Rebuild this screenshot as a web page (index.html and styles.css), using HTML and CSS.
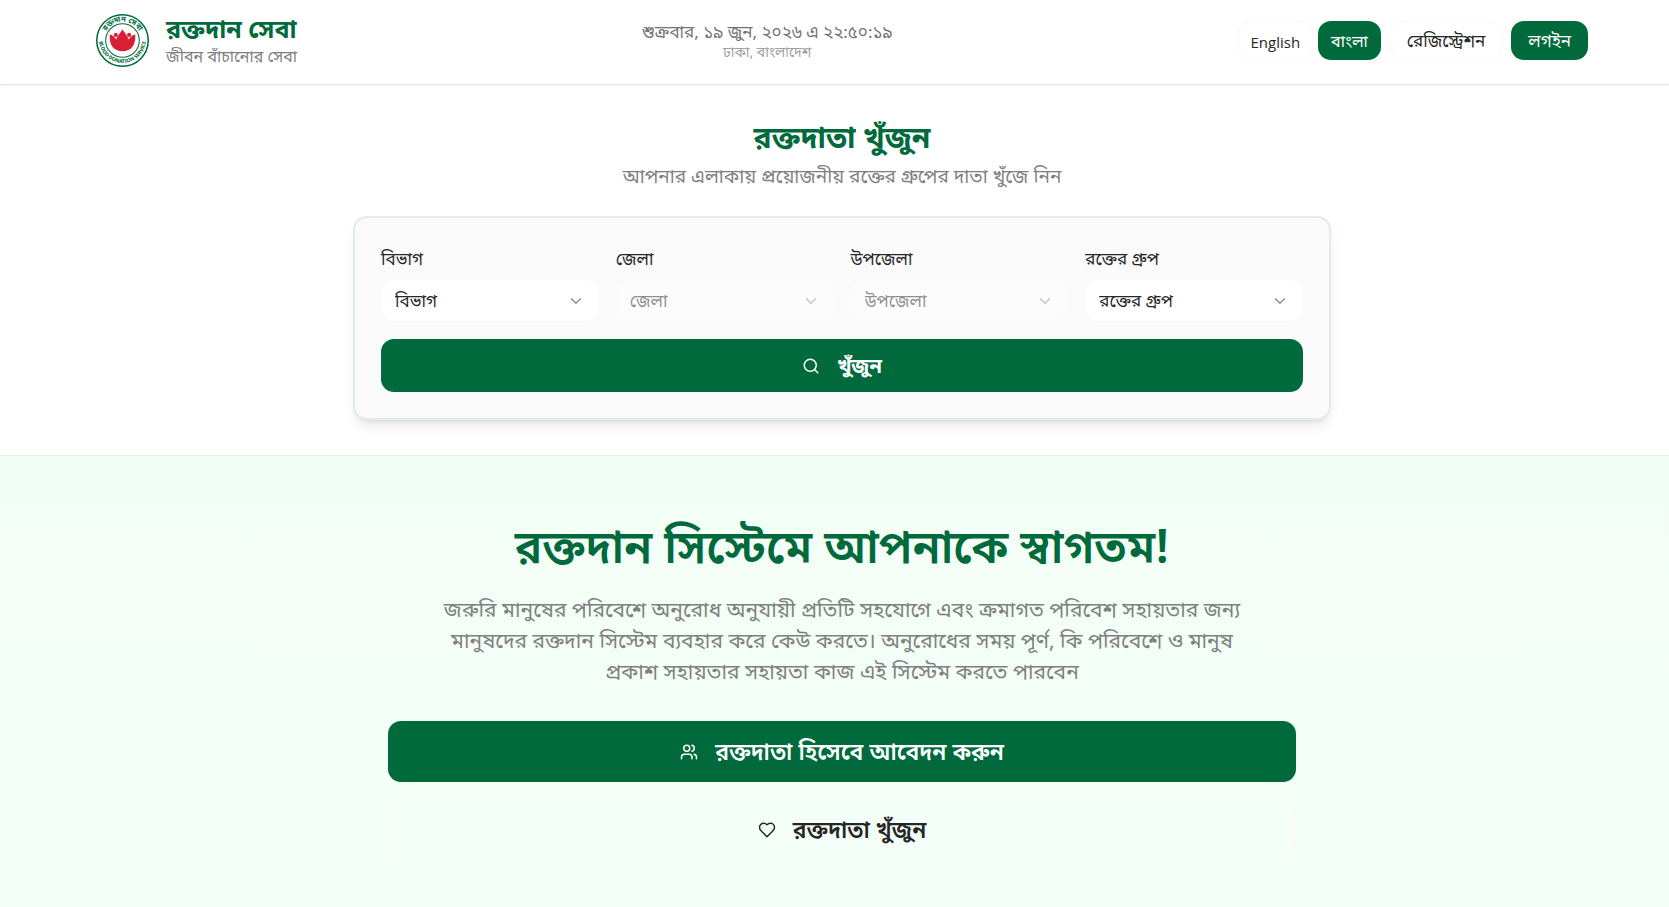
FILE: index.html
```html
<!DOCTYPE html>
<html lang="bn">
<head>
  <meta charset="UTF-8">
  <meta name="viewport" content="width=device-width, initial-scale=1.0">
  <title>রক্তদান সেবা</title>
  <link rel="stylesheet" href="styles.css">
</head>
<body>
  <header class="header">
    <div class="header-inner">
      <a class="brand" href="#">
        <svg class="logo" viewBox="0 0 104 104" role="img" aria-label="Blood Donation Service">
          <defs>
            <path id="arc-top" d="M15 52a37 37 0 0 1 74 0"/>
            <path id="arc-bottom" d="M6 50a46 46 0 0 0 92 0"/>
          </defs>
          <circle cx="52" cy="52" r="50.5" fill="#fff" stroke="#006a3d" stroke-width="3"/>
          <circle cx="52" cy="52" r="33" fill="none" stroke="#006a3d" stroke-width="2"/>
          <text class="logo-bn"><textPath href="#arc-top" startOffset="50%">রক্তদান সেবা</textPath></text>
          <text class="logo-en"><textPath href="#arc-bottom" startOffset="50%">BLOOD DONATION SERVICE</textPath></text>
          <g fill="#d81f35">
            <path d="M27 40c5 1 9 4 12 9l5 6h16l5-6c3-5 7-8 12-9 1 15-4 27-13 30-4 2-8 3-12 3s-8-1-12-3c-9-3-14-15-13-30z"/>
            <circle cx="39" cy="41" r="4"/>
            <circle cx="65" cy="41" r="4"/>
            <path d="M52 30c5 9 13 15 13 25a13 13 0 0 1-26 0c0-10 8-16 13-25z"/>
          </g>
        </svg>
        <span class="brand-text">
          <strong>রক্তদান সেবা</strong>
          <span>জীবন বাঁচানোর সেবা</span>
        </span>
      </a>

      <div class="clock">
        <div class="date">শুক্রবার, ১৯ জুন, ২০২৬ এ ২২:৫০:১৯</div>
        <div class="place">ঢাকা, বাংলাদেশ</div>
      </div>

      <nav class="nav">
        <div class="lang">
          <button class="btn btn-outline btn-sm btn-en" type="button">English</button>
          <button class="btn btn-primary btn-sm" type="button">বাংলা</button>
        </div>
        <a class="btn btn-outline" href="#">রেজিস্ট্রেশন</a>
        <a class="btn btn-primary" href="#">লগইন</a>
      </nav>
    </div>
  </header>

  <main>
    <section class="search">
      <h2>রক্তদাতা খুঁজুন</h2>
      <p class="lead">আপনার এলাকায় প্রয়োজনীয় রক্তের গ্রুপের দাতা খুঁজে নিন</p>

      <form class="card">
        <div class="fields">
          <div class="field">
            <label for="division">বিভাগ</label>
            <div class="select">
              <select id="division"><option>বিভাগ</option></select>
              <svg viewBox="0 0 24 24"><path d="m6 9 6 6 6-6"/></svg>
            </div>
          </div>
          <div class="field">
            <label for="district">জেলা</label>
            <div class="select disabled">
              <select id="district" disabled><option>জেলা</option></select>
              <svg viewBox="0 0 24 24"><path d="m6 9 6 6 6-6"/></svg>
            </div>
          </div>
          <div class="field">
            <label for="upazila">উপজেলা</label>
            <div class="select disabled">
              <select id="upazila" disabled><option>উপজেলা</option></select>
              <svg viewBox="0 0 24 24"><path d="m6 9 6 6 6-6"/></svg>
            </div>
          </div>
          <div class="field">
            <label for="blood">রক্তের গ্রুপ</label>
            <div class="select">
              <select id="blood"><option>রক্তের গ্রুপ</option></select>
              <svg viewBox="0 0 24 24"><path d="m6 9 6 6 6-6"/></svg>
            </div>
          </div>
        </div>
        <button class="btn btn-primary btn-search" type="button">
          <svg class="icon" viewBox="0 0 24 24"><circle cx="11" cy="11" r="8"/><path d="m21 21-4.3-4.3"/></svg>
          খুঁজুন
        </button>
      </form>
    </section>

    <section class="hero">
      <h1>রক্তদান সিস্টেমে আপনাকে স্বাগতম!</h1>
      <p>
        জরুরি মানুষের পরিবেশে অনুরোধ অনুযায়ী প্রতিটি সহযোগে এবং ক্রমাগত পরিবেশ সহায়তার জন্য<br>
        মানুষদের রক্তদান সিস্টেম ব্যবহার করে কেউ করতে। অনুরোধের সময় পূর্ণ, কি পরিবেশে ও মানুষ<br>
        প্রকাশ সহায়তার সহায়তা কাজ এই সিস্টেম করতে পারবেন
      </p>
      <div class="actions">
        <a class="btn btn-primary btn-lg" href="#">
          <svg class="icon" viewBox="0 0 24 24"><path d="M16 21v-2a4 4 0 0 0-4-4H6a4 4 0 0 0-4 4v2"/><circle cx="9" cy="7" r="4"/><path d="M22 21v-2a4 4 0 0 0-3-3.87"/><path d="M16 3.13a4 4 0 0 1 0 7.75"/></svg>
          রক্তদাতা হিসেবে আবেদন করুন
        </a>
        <a class="btn btn-outline btn-lg" href="#">
          <svg class="icon" viewBox="0 0 24 24"><path d="M19 14c1.49-1.46 3-3.21 3-5.5A5.5 5.5 0 0 0 16.5 3c-1.76 0-3 .5-4.5 2-1.5-1.5-2.74-2-4.5-2A5.5 5.5 0 0 0 2 8.5c0 2.3 1.5 4.05 3 5.5l7 7Z"/></svg>
          রক্তদাতা খুঁজুন
        </a>
      </div>
    </section>
  </main>
</body>
</html>
```

FILE: styles.css
```css
* {
  box-sizing: border-box;
}

body {
  margin: 0;
  min-height: 100vh;
  display: flex;
  flex-direction: column;
  background-color: #fff;
  color: #262626;
  font-family: "Nirmala UI", "Noto Sans Bengali", "Open Sans", sans-serif;
  font-size: 17px;
}

h1, h2, p {
  margin: 0;
}

a {
  color: inherit;
  text-decoration: none;
}

.header {
  border-bottom: 1px solid #e4e4eb;
  box-shadow: 0 1px 2px rgba(0, 0, 0, 0.05);
  padding: 0 81px 0 96px;
}

.header-inner {
  display: flex;
  align-items: center;
  justify-content: space-between;
  height: 84px;
  padding-bottom: 3px;
}

.brand {
  display: flex;
  align-items: center;
  gap: 17px;
}

.logo {
  width: 53px;
  height: 53px;
}

.logo-bn,
.logo-en {
  fill: #006a3d;
  font-weight: bold;
  text-anchor: middle;
}

.logo-bn {
  font-size: 15px;
}

.logo-en {
  font-size: 10px;
}

.brand-text {
  display: flex;
  flex-direction: column;
  padding-top: 7px;
  color: #808080;
  font-size: 16px;
  line-height: 24px;
}

.brand-text strong {
  color: #006a3d;
  font-size: 25px;
  line-height: 28px;
}

.clock {
  padding-top: 4px;
  text-align: center;
}

.date {
  color: #737373;
  font-size: 17px;
  line-height: 22px;
}

.place {
  color: #a0a0a0;
  font-size: 14px;
  line-height: 18px;
}

.nav {
  display: flex;
  align-items: center;
  gap: 9px;
}

.lang {
  display: flex;
  gap: 5px;
}

.btn {
  display: flex;
  align-items: center;
  justify-content: center;
  height: 39px;
  padding: 4px 16px 0;
  border: 1px solid transparent;
  border-radius: 13px;
  background-color: transparent;
  color: #262626;
  font-family: inherit;
  font-size: 17px;
  white-space: nowrap;
  cursor: pointer;
}

.btn-sm {
  padding: 4px 12px 0;
  font-size: 16px;
}

.btn-en {
  padding: 2px 12px 0;
  font-family: "Segoe UI", "Open Sans", sans-serif;
  font-size: 15px;
}

.btn-outline {
  border-color: #faf8f8;
}

.btn-primary {
  background-color: #006a3d;
  color: #fff;
}

main {
  flex: 1;
  display: flex;
  flex-direction: column;
}

.search {
  display: flex;
  flex-direction: column;
  align-items: center;
  padding: 36px 0 35px 15px;
  text-align: center;
}

.search h2 {
  color: #006a3d;
  font-size: 30px;
  line-height: 38px;
}

.lead {
  margin: 5px 0 22px;
  color: #808080;
  font-size: 19px;
  line-height: 30px;
}

.card {
  width: 100%;
  max-width: 978px;
  padding: 26px;
  border: 2px solid #e0ede8;
  border-radius: 14px;
  background-color: #fafafa;
  box-shadow: 0 8px 13px -3px rgba(0, 0, 0, 0.1), 0 3px 5px -3px rgba(0, 0, 0, 0.1);
  text-align: left;
}

.fields {
  display: grid;
  grid-template-columns: repeat(4, 1fr);
  gap: 17px;
}

.field label {
  display: block;
  padding-top: 3px;
  margin-bottom: 4px;
  font-size: 17px;
  line-height: 28px;
}

.select {
  position: relative;
}

.select.disabled {
  opacity: 0.5;
}

.select select {
  display: block;
  width: 100%;
  height: 43px;
  padding: 3px 40px 0 13px;
  border: 1px solid #fafafa;
  border-radius: 13px;
  appearance: none;
  background-color: #fff;
  color: #262626;
  opacity: 1;
  font-family: inherit;
  font-size: 17px;
}

.select svg {
  position: absolute;
  top: 13px;
  right: 14px;
  width: 18px;
  height: 18px;
  fill: none;
  stroke: #929292;
  stroke-width: 2;
  stroke-linecap: round;
  stroke-linejoin: round;
  pointer-events: none;
}

.icon {
  width: 18px;
  height: 18px;
  margin-right: 17px;
  margin-bottom: 4px;
  fill: none;
  stroke: currentColor;
  stroke-width: 2;
  stroke-linecap: round;
  stroke-linejoin: round;
}

.btn-search {
  width: 100%;
  height: 53px;
  margin-top: 17px;
  font-size: 20px;
  font-weight: bold;
}

.hero {
  flex: 1;
  display: flex;
  flex-direction: column;
  align-items: center;
  padding: 64px 0 44px 15px;
  border-top: 1px solid #e4f0ea;
  background: linear-gradient(#f2fdf5, #f5fffa);
  text-align: center;
}

.hero h1 {
  color: #006a3d;
  font-size: 46px;
  font-weight: 600;
  line-height: 64px;
}

.hero p {
  margin: 13px 0 31px;
  color: #808080;
  font-size: 21px;
  line-height: 31px;
}

.actions {
  display: flex;
  flex-direction: column;
  gap: 17px;
  width: 100%;
  max-width: 908px;
}

.btn-lg {
  height: 61px;
  font-size: 23px;
  font-weight: 600;
}
```
